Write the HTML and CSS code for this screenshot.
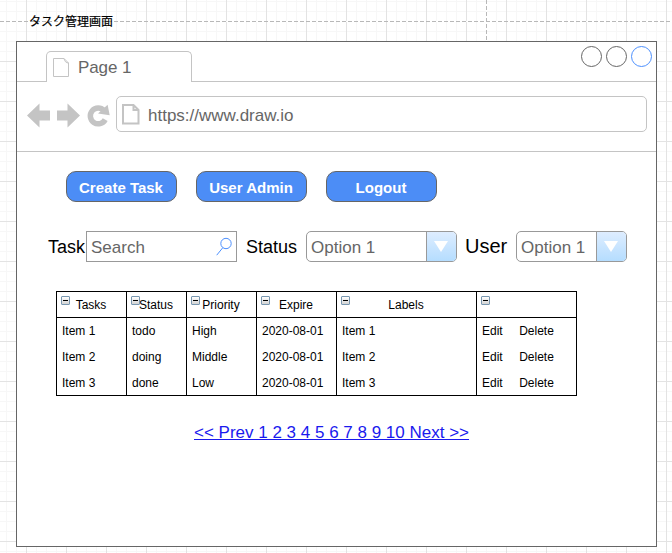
FILE: index.html
```html
<!DOCTYPE html>
<html lang="ja">
<head>
<meta charset="utf-8">
<title>タスク管理画面</title>
<link rel="stylesheet" href="styles.css">
</head>
<body>
<div class="page-break"></div>
<h1 class="title">タスク管理画面</h1>
<main class="window">
  <header class="tabs">
    <div class="tab">
      <svg class="tab-icon" width="17" height="20" viewBox="0 0 17 20"><path d="M.5.5H11L15.500 5V18.500H.5ZM11 .5Q12 5 15.500 5"/></svg>
      <span class="tab-name">Page 1</span>
    </div>
    <div class="controls"><i></i><i></i><i class="active"></i></div>
  </header>
  <div class="toolbar">
    <svg class="nav" width="84" height="26" viewBox="0 0 84 26">
      <path d="M0 12.500L12.500 .5V7.500H23V17.500H12.500V24.500Z"/>
      <path d="M30 7.500H40.500V.5L53 12.500L40.500 24.500V17.500H30Z"/>
      <path class="ring" d="M77 7.500A7.900 7.900 0 1 0 78.200 16.600"/>
      <path d="M80.600 1.700L82.700 12.300L71 10.600Z"/>
    </svg>
    <div class="address">
      <svg width="18" height="21" viewBox="0 0 18 21"><path d="M1 1H11.500L16.500 6V19.500H1ZM11.500 1V6H16.500"/></svg>
      <span>https://www.draw.io</span>
    </div>
  </div>
  <section class="content">
    <nav class="actions"><button>Create Task</button><button>User Admin</button><button>Logout</button></nav>
    <div class="filters">
      <label class="task-label">Task</label>
      <div class="search"><span>Search</span><svg width="17" height="20" viewBox="0 0 17 20"><circle cx="10" cy="6.500" r="5.200"/><path d="M6.800 10.700L.7 18.200"/></svg></div>
      <label class="status-label">Status</label>
      <div class="select status"><span>Option 1</span><b><svg width="14" height="11"><path d="M0 0H14L7 11Z"/></svg></b></div>
      <label class="user-label">User</label>
      <div class="select user"><span>Option 1</span><b><svg width="14" height="11"><path d="M0 0H14L7 11Z"/></svg></b></div>
    </div>
    <div class="table">
      <div class="col"><h2><i></i>Tasks</h2><p>Item 1</p><p>Item 2</p><p>Item 3</p></div>
      <div class="col"><h2><i></i>Status</h2><p>todo</p><p>doing</p><p>done</p></div>
      <div class="col"><h2><i></i>Priority</h2><p>High</p><p>Middle</p><p>Low</p></div>
      <div class="col"><h2><i></i>Expire</h2><p>2020-08-01</p><p>2020-08-01</p><p>2020-08-01</p></div>
      <div class="col"><h2><i></i>Labels</h2><p>Item 1</p><p>Item 2</p><p>Item 3</p></div>
      <div class="col"><h2><i></i></h2><p><span>Edit</span><span>Delete</span></p><p><span>Edit</span><span>Delete</span></p><p><span>Edit</span><span>Delete</span></p></div>
    </div>
    <div class="pages">&lt;&lt; Prev 1 2 3 4 5 6 7 8 9 10 Next &gt;&gt;</div>
  </section>
</main>
</body>
</html>
```
FILE: styles.css
```css
* { box-sizing: border-box; }
body {
  margin: 0;
  width: 672px;
  height: 553px;
  overflow: hidden;
  font-family: "Liberation Sans", "Noto Sans CJK JP", sans-serif;
  color: #000;
  background:
    repeating-linear-gradient(90deg, #b8b8b8 0 4px, #fff 4px 6px) 0 21px / 100% 1px no-repeat,
    linear-gradient(90deg, #e3e3e3 1px, transparent 1px) 26px 21px / 40px 40px,
    linear-gradient(#e3e3e3 1px, transparent 1px) 26px 21px / 40px 40px,
    linear-gradient(90deg, #f7f7f7 1px, transparent 1px) 6px 1px / 10px 10px,
    linear-gradient(#f7f7f7 1px, transparent 1px) 6px 1px / 10px 10px,
    #fff;
}
svg { display: block; flex: none; }
.page-break {
  position: absolute;
  left: 486px;
  top: 0;
  width: 1px;
  height: 41px;
  background: repeating-linear-gradient(#b8b8b8 0 4px, #fff 4px 6px);
}
.title {
  margin: 0;
  height: 41px;
  padding: 12px 0 0 29px;
  font: 400 12px/18px "Noto Sans CJK JP", sans-serif;
  -webkit-text-stroke: .2px #000;
}
.window {
  width: 641px;
  height: 506px;
  margin-left: 16px;
  border: 1px solid #666;
  background: #fff;
}
.tabs {
  display: flex;
  justify-content: space-between;
  height: 40px;
  padding: 9px 4px 0 29px;
  border-bottom: 1px solid #c4c4c4;
}
.tab {
  display: flex;
  width: 146px;
  height: 31px;
  padding: 6px 0 0 6px;
  border: 1px solid #c4c4c4;
  border-bottom: 0;
  border-radius: 5px 5px 0 0;
  background: #fff;
  color: #666;
}
.tab-icon, .address svg { fill: none; stroke: #c4c4c4; }
.tab-name { margin-left: 8px; font-size: 17px; line-height: 20px; letter-spacing: -.1px; }
.controls { display: flex; gap: 4px; margin-top: -5px; }
.controls i { width: 21px; height: 21px; border: 1px solid #666; border-radius: 50%; }
.controls .active { border-color: #4d90fe; }
.toolbar {
  display: flex;
  height: 70px;
  padding: 14px 9px 0 10px;
  border-bottom: 1px solid #c4c4c4;
}
.nav { margin-top: 7px; fill: #c4c4c4; }
.nav .ring { fill: none; stroke: #c4c4c4; stroke-width: 5.5px; }
.address {
  display: flex;
  align-items: center;
  width: 531px;
  height: 36px;
  margin-left: 5px;
  padding-left: 5px;
  border: 1px solid #c4c4c4;
  border-radius: 5px;
  color: #666;
  font-size: 17px;
}
.address svg { stroke-width: 2; }
.address span { margin: 4px 0 0 8px; }
.content { padding-top: 19px; }
.actions { display: flex; gap: 19px; padding-left: 49px; }
button {
  width: 111px;
  height: 31px;
  padding: 2px 1px 0 0;
  border: 1px solid #666;
  border-radius: 10px;
  background: #4c8df6;
  color: #fff;
  font: bold 15px "Liberation Sans", sans-serif;
}
.filters { display: flex; height: 31px; margin-top: 29px; padding-left: 31px; line-height: 31px; }
.filters label { white-space: nowrap; }
.task-label { width: 38px; padding-top: 1px; font-size: 18px; }
.status-label { width: 69px; padding: 1px 0 0 9px; font-size: 18px; }
.user-label { width: 59px; padding-left: 8px; font-size: 20px; }
.search, .select { display: flex; border: 1px solid #999; color: #666; font-size: 17px; }
.search { width: 151px; justify-content: space-between; padding: 0 3px 0 4px; }
.search svg { margin-top: 5px; fill: none; stroke: #4d90fe; }
.select { justify-content: space-between; border-radius: 5px; overflow: hidden; padding-left: 4px; }
.select span { white-space: nowrap; }
.status { width: 151px; }
.user { width: 111px; }
.select b {
  width: 30px;
  padding: 9px 0 0 7px;
  border-left: 1px solid #999;
  background: linear-gradient(#deedff, #b5ddff);
}
.select path { fill: #fff; }
.table {
  display: grid;
  grid-template-columns: 70px 60px 70px 80px 140px 100px;
  width: 521px;
  height: 105px;
  margin: 29px 0 0 39px;
  font-size: 12px;
  border-right: 1px solid #000;
}
.col { height: 105px; border: solid #000; border-width: 1px 0 1px 1px; }
.col h2 {
  position: relative;
  height: 26px;
  margin: 0;
  padding-right: 1px;
  border-bottom: 1px solid #000;
  text-align: center;
  font: 12px/26px "Liberation Sans", sans-serif;
}
.col h2 i {
  position: absolute;
  left: 4px;
  top: 4px;
  width: 9px;
  height: 9px;
  border: 1px solid #7897b0;
  border-radius: 1px;
  background: linear-gradient(#000, #000) center / 5px 1px no-repeat, linear-gradient(#fff, #d3d3d3);
}
.col p { height: 26px; margin: 0; padding-left: 5px; line-height: 27px; }
.col p:last-child { height: 25px; }
.col p span + span { margin-left: 16.5px; }
.pages {
  width: 276px;
  margin: 27px 0 0 177px;
  color: #1a1aee;
  font-size: 17px;
  line-height: 20px;
  white-space: nowrap;
  text-decoration: underline;
}
```
